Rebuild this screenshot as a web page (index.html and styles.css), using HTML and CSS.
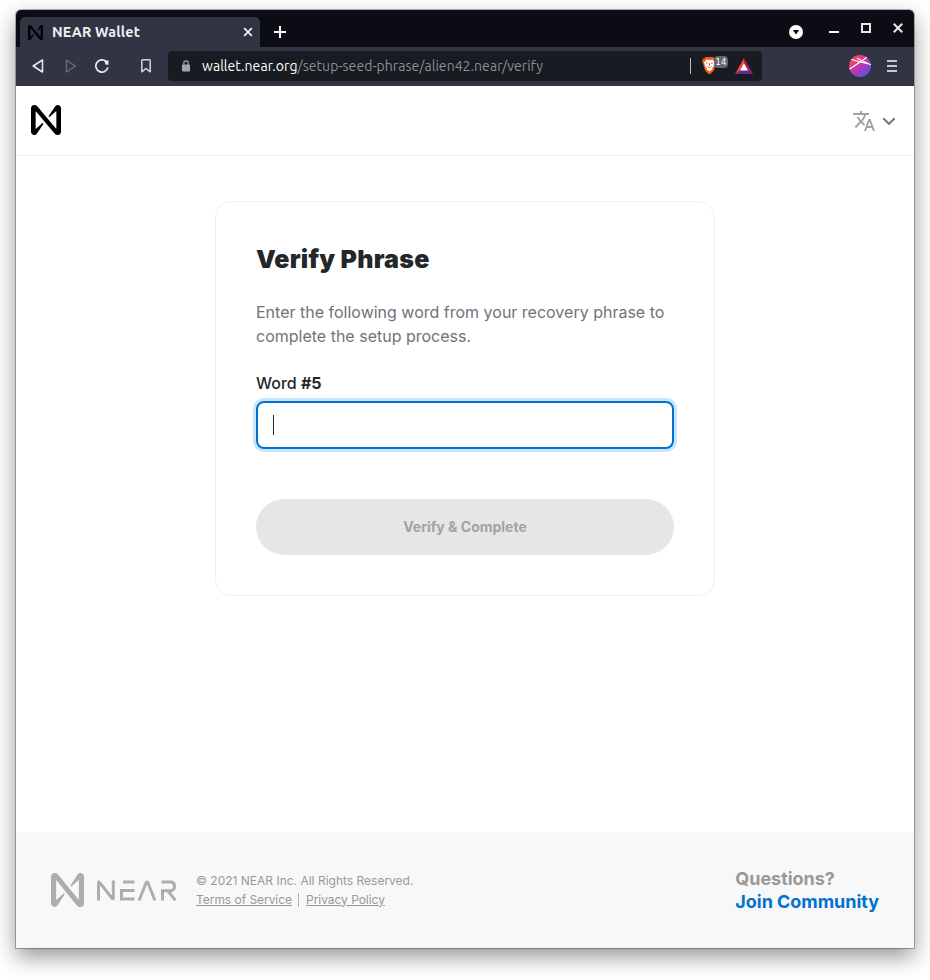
FILE: index.html
```html
<!DOCTYPE html>
<html lang="en">
<head>
<meta charset="utf-8">
<title>NEAR Wallet</title>
<link rel="stylesheet" href="styles.css">
</head>
<body>
<svg class="defs" width="0" height="0">
  <symbol id="near" viewBox="0 0 90 90"><path d="M72.2 4.6L53.4 32.5c-1.3 1.9 1.2 4.2 3 2.6L74.9 19c.5-.4 1.2-.1 1.2.6v50.3c0 .7-.9 1-1.3.5l-56-67C17 1.2 14.4 0 11.5 0h-2C4.3 0 0 4.3 0 9.6v70.8C0 85.7 4.3 90 9.6 90c3.3 0 6.4-1.7 8.2-4.6l18.8-27.9c1.3-1.9-1.2-4.2-3-2.6l-18.5 16c-.5.4-1.2.1-1.2-.6V20.1c0-.7.9-1 1.3-.5l56 67c1.8 2.2 4.5 3.4 7.3 3.4h2c5.3 0 9.6-4.3 9.6-9.6V9.6C90 4.3 85.7 0 80.4 0c-3.3 0-6.4 1.7-8.2 4.6z"/></symbol>
</svg>
<div class="window">
  <div class="tabs">
    <div class="tab">
      <svg class="favicon" width="15" height="15"><use href="#near"/></svg>
      <span class="tab-title">NEAR Wallet</span>
      <svg class="tab-close" width="10" height="10" viewBox="0 0 10 10"><path d="M1.2 1.2l7.6 7.6M8.8 1.2L1.2 8.8"/></svg>
    </div>
    <svg class="new-tab" width="12" height="12" viewBox="0 0 12 12"><path d="M6 0v12M0 6h12"/></svg>
    <div class="controls">
      <svg class="dropdown" width="14" height="14" viewBox="0 0 14 14"><circle cx="7" cy="7" r="7" fill="#fff"/><path d="M3.8 5h6.4L7 9.6z" fill="#0b0c14"/></svg>
      <svg class="minimize" width="10" height="2" viewBox="0 0 10 2"><path d="M0 0h10v2H0z" fill="#fff"/></svg>
      <svg class="maximize" width="10" height="10" viewBox="0 0 10 10"><path d="M1 1h8v8H1z" fill="none" stroke="#e9eaec" stroke-width="2"/></svg>
      <svg class="close" width="10" height="10" viewBox="0 0 10 10"><path d="M.8.8l8.4 8.4M9.2.8L.8 9.2" fill="none" stroke="#e9eaec" stroke-width="2"/></svg>
    </div>
  </div>
  <div class="toolbar">
    <svg class="back" width="12" height="14" viewBox="0 0 12 14"><path d="M10.5 1v12L1.2 7z"/></svg>
    <svg class="forward" width="12" height="14" viewBox="0 0 12 14"><path d="M1.5 1v12L10.2 7z"/></svg>
    <svg class="reload" width="14" height="14" viewBox="0 0 14 14"><path d="M12.9 8.4A6.1 6.1 0 1 1 11 2.4"/><path d="M9.2 1.5h4.3v4.2h-2.8z" fill="#e9eaec" stroke="none"/></svg>
    <svg class="bookmark" width="10" height="14" viewBox="0 0 10 14"><path d="M.8 1.6Q.8.8 1.6.8h6.8q.8 0 .8.8v11.2L5 9.5.8 12.8z"/></svg>
    <div class="address">
      <svg class="lock" width="8" height="12" viewBox="0 0 8 12"><path d="M1.8 5V3a2.2 2.2 0 0 1 4.4 0v2" fill="none" stroke="#a2a4aa" stroke-width="1.2"/><rect y="4.5" width="8" height="7" rx=".7" fill="#a2a4aa"/></svg>
      <span class="url"><b>wallet.near.org</b>/setup-seed-phrase/alien42.near/verify</span>
      <span class="divider"></span>
      <div class="shield">
        <svg width="15" height="18" viewBox="0 0 15 18"><path d="M3.7 0h7.6l1.5 1.5 1.4.1.7 3.1-.8 1.4-1.8 6.5c-.5 1.8-2.5 3.1-4.8 4.9-2.3-1.8-4.3-3.1-4.8-4.9L.9 6.1.1 4.7l.7-3.1 1.4-.1z" fill="#fb5413"/><path d="M4.5 2.6l3 .4 3-.4 2.4 2.8-1.2 4.2-1.4 1.4.1 1.6-2.9 2-2.9-2 .1-1.6-1.4-1.4-1.2-4.2z" fill="#fff"/><path d="M4 5.8l2 .6M11 5.8l-2 .6M7.5 6v3M5.4 9.8l2.1.8 2.1-.8" fill="none" stroke="#d34b22" stroke-width=".8"/></svg>
        <span class="count">14</span>
      </div>
      <svg class="bat" width="18" height="16" viewBox="0 0 18 16"><path d="M9 0L0 16l9-4.5z" fill="#ff4724"/><path d="M9 0l9 16-9-4.5z" fill="#9e1f63"/><path d="M0 16h18l-5-4H5z" fill="#662d91"/><path d="M9 5.3l4 7.2H5z" fill="#fff"/></svg>
    </div>
    <svg class="avatar" width="22" height="22" viewBox="0 0 22 22"><defs><linearGradient id="orb" x1=".15" y1=".1" x2=".85" y2=".95"><stop stop-color="#f94b55"/><stop offset=".5" stop-color="#bd35b2"/><stop offset="1" stop-color="#4958e5"/></linearGradient><clipPath id="round"><circle cx="11" cy="11" r="11"/></clipPath></defs><circle cx="11" cy="11" r="11" fill="url(#orb)"/><g clip-path="url(#round)" fill="none" stroke="#fff" stroke-width="1.1"><path d="M2 4.2l9 2.8 11 2.5M0 14.5L18 2.3M8 3.2l13 6.3"/></g></svg>
    <svg class="menu" width="10" height="12" viewBox="0 0 10 12"><path d="M0 1h10M0 6h10M0 11h10"/></svg>
  </div>
  <header class="site-header">
    <svg class="brand" width="30" height="30"><use href="#near"/></svg>
    <div class="language">
      <svg width="24" height="24" viewBox="0 0 24 24" fill="#a2a2a8"><path d="M12.87 15.07l-2.54-2.51.03-.03c1.74-1.94 2.98-4.17 3.71-6.53H17V4h-7V2H8v2H1v1.99h11.17C11.5 7.92 10.44 9.75 9 11.35 8.07 10.32 7.3 9.19 6.69 8h-2c.73 1.63 1.73 3.17 2.98 4.56l-5.09 5.02L4 19l5-5 3.11 3.11.76-2.04zM18.5 10h-2L12 22h2l1.12-3h4.75L21 22h2l-4.5-12zm-2.62 7l1.62-4.33L19.12 17h-3.24z"/></svg>
      <svg width="14" height="9" viewBox="0 0 14 9"><path d="M1.3 1.2L7 6.9l5.7-5.7" fill="none" stroke="#72727a" stroke-width="2"/></svg>
    </div>
  </header>
  <main class="content">
    <form class="card">
      <h1>Verify Phrase</h1>
      <p>Enter the following word from your recovery phrase to complete the setup process.</p>
      <div class="label">Word <b>#5</b></div>
      <div class="field"><span class="caret"></span></div>
      <button type="button" disabled>Verify &amp; Complete</button>
    </form>
  </main>
  <footer class="site-footer">
    <svg class="footer-mark" width="33" height="34" viewBox="0 0 90 90" preserveAspectRatio="none"><use href="#near"/></svg>
    <svg class="wordmark" width="79" height="21" viewBox="0 0 79 21"><path d="M1.5 20.5V3q0-2 1.3-.4L15 18.2q1.3 1.5 1.3-.5V.5M26 2h11.5M37.5 10.5H24.5V19h13M42 20.5L49 3q1-2 2 0l7 17.5M64.5 2h9q4 0 4 4.3t-4 4.4H65.5v9.8M71.5 11.5l7 9"/></svg>
    <div class="legal">
      <div>© 2021 NEAR Inc. All Rights Reserved.</div>
      <div class="links"><a>Terms of Service</a><i class="bar"></i><a>Privacy Policy</a></div>
    </div>
    <div class="help"><div>Questions?</div><a>Join Community</a></div>
  </footer>
</div>
</body>
</html>
```

FILE: styles.css
```css
* { box-sizing: border-box; }
body { margin: 0; padding: 10px 16px 32px; height: 980px; overflow: hidden; background: #fff; font-family: Inter, sans-serif; }
svg { display: block; flex: none; }
.defs { position: absolute; }
.window { height: 938px; display: flex; flex-direction: column; border-radius: 5px 5px 0 0; background: #fff; box-shadow: 0 0 0 1px rgba(0,0,0,.28), 0 9px 22px rgba(0,0,0,.42); }

.tabs { height: 37px; flex: none; display: flex; align-items: flex-start; padding: 7px 11px 0 4px; background: #0b0c14; border-radius: 5px 5px 0 0; font-family: Ubuntu, "Noto Sans", sans-serif; }
.tab { width: 240px; height: 30px; display: flex; align-items: center; padding: 0 7px 0 8px; background: #313443; border-radius: 5px 5px 0 0; }
.favicon { fill: #000; }
.tab-title { flex: 1; margin-left: 9px; color: #eeeff1; font-size: 14.3px; font-weight: 600; line-height: 20px; letter-spacing: .2px; white-space: nowrap; }
.tab-close, .new-tab { fill: none; stroke: #f0f1f3; stroke-width: 1.8; }
.new-tab { margin: 9px 0 0 14px; stroke: #fff; stroke-width: 2; }
.controls { margin-left: auto; display: flex; }
.dropdown { margin: 8px 26px 0 0; }
.minimize { margin: 14px 22px 0 0; }
.maximize { margin: 6px 22px 0 0; }
.close { margin-top: 6px; }

.toolbar { height: 39px; flex: none; display: flex; align-items: center; padding: 0 17px 1px 16px; background: #313443; }
.back, .forward, .reload, .bookmark, .menu { fill: none; stroke: #e9eaec; stroke-width: 1.5; stroke-linejoin: round; }
.forward { margin-left: 21px; stroke: #686b78; }
.reload { margin-left: 18px; stroke-width: 1.7; }
.bookmark { margin-left: 32px; stroke: #d5d6da; }
.address { width: 594px; height: 30px; margin-left: 17px; display: flex; align-items: center; padding: 0 9px 0 14px; background: #181b21; border-radius: 4px; }
.url { margin-left: 12px; color: #8b8e92; font: 14px/20px Ubuntu, "Noto Sans", sans-serif; letter-spacing: .05px; white-space: nowrap; }
.url b { color: #fff; font-weight: 400; }
.divider { width: 1px; height: 16px; margin-left: auto; background: #b8b9bc; }
.shield { position: relative; margin-left: 11px; }
.count { position: absolute; left: 12px; top: -1px; width: 14px; height: 12px; border-radius: 4px; background: #636775; color: #fff; font: 8.5px/13px "DejaVu Sans", sans-serif; text-align: center; }
.bat { margin-left: 18px; }
.avatar { margin-left: auto; }
.menu { margin-left: 16px; stroke: #c8cace; stroke-width: 2; }

.site-header { height: 70px; flex: none; display: flex; align-items: center; justify-content: space-between; padding: 0 18px 1px 15px; border-bottom: 1px solid #f0f0f1; }
.brand { fill: #000; }
.language { display: flex; align-items: center; gap: 6px; padding-top: 2px; }

.content { flex: 1; display: flex; justify-content: center; align-items: flex-start; padding-top: 45px; }
.card { width: 500px; height: 395px; padding: 40px; border: 1px solid #f0f0f1; border-radius: 16px; }
h1 { margin: 0; color: #24272a; font-size: 25px; line-height: 34px; font-weight: 900; letter-spacing: .23px; }
p { margin: 24px 0 0; color: #72727a; font-size: 16px; line-height: 24px; }
.label { margin-top: 23px; color: #24272a; font-size: 16px; line-height: 24px; font-weight: 500; }
.label b { font-weight: 700; }
.field { height: 48px; margin-top: 6px; padding: 12px 15px; border: 2px solid #0072ce; border-radius: 8px; box-shadow: 0 0 0 3px #c8e4ff; }
.caret { display: block; width: 1px; height: 20px; background: #24272a; }
button { display: block; width: 100%; height: 56px; margin-top: 50px; padding: 0; border: 0; border-radius: 28px; background: #e6e6e6; color: #a2a2a8; font: 700 14px/56px Inter, sans-serif; }

.site-footer { height: 116px; flex: none; display: flex; align-items: center; padding: 0 35px; background: #f8f8f8; color: #999; }
.footer-mark { fill: #adadad; }
.wordmark { margin-left: 13px; fill: none; stroke: #adadad; stroke-width: 3; }
.legal { margin-left: 20px; padding-bottom: 1px; font-size: 12px; line-height: 19px; white-space: nowrap; }
.links { letter-spacing: -.04px; }
.legal a { text-decoration: underline; }
.bar { display: inline-block; width: 1px; height: 14px; margin: 0 7px 0 6px; vertical-align: -3px; background: #b0b0b0; }
.help { margin-left: auto; font-size: 18px; line-height: 23px; font-weight: 700; letter-spacing: -.04px; white-space: nowrap; }
.help a { color: #0072ce; }
```
